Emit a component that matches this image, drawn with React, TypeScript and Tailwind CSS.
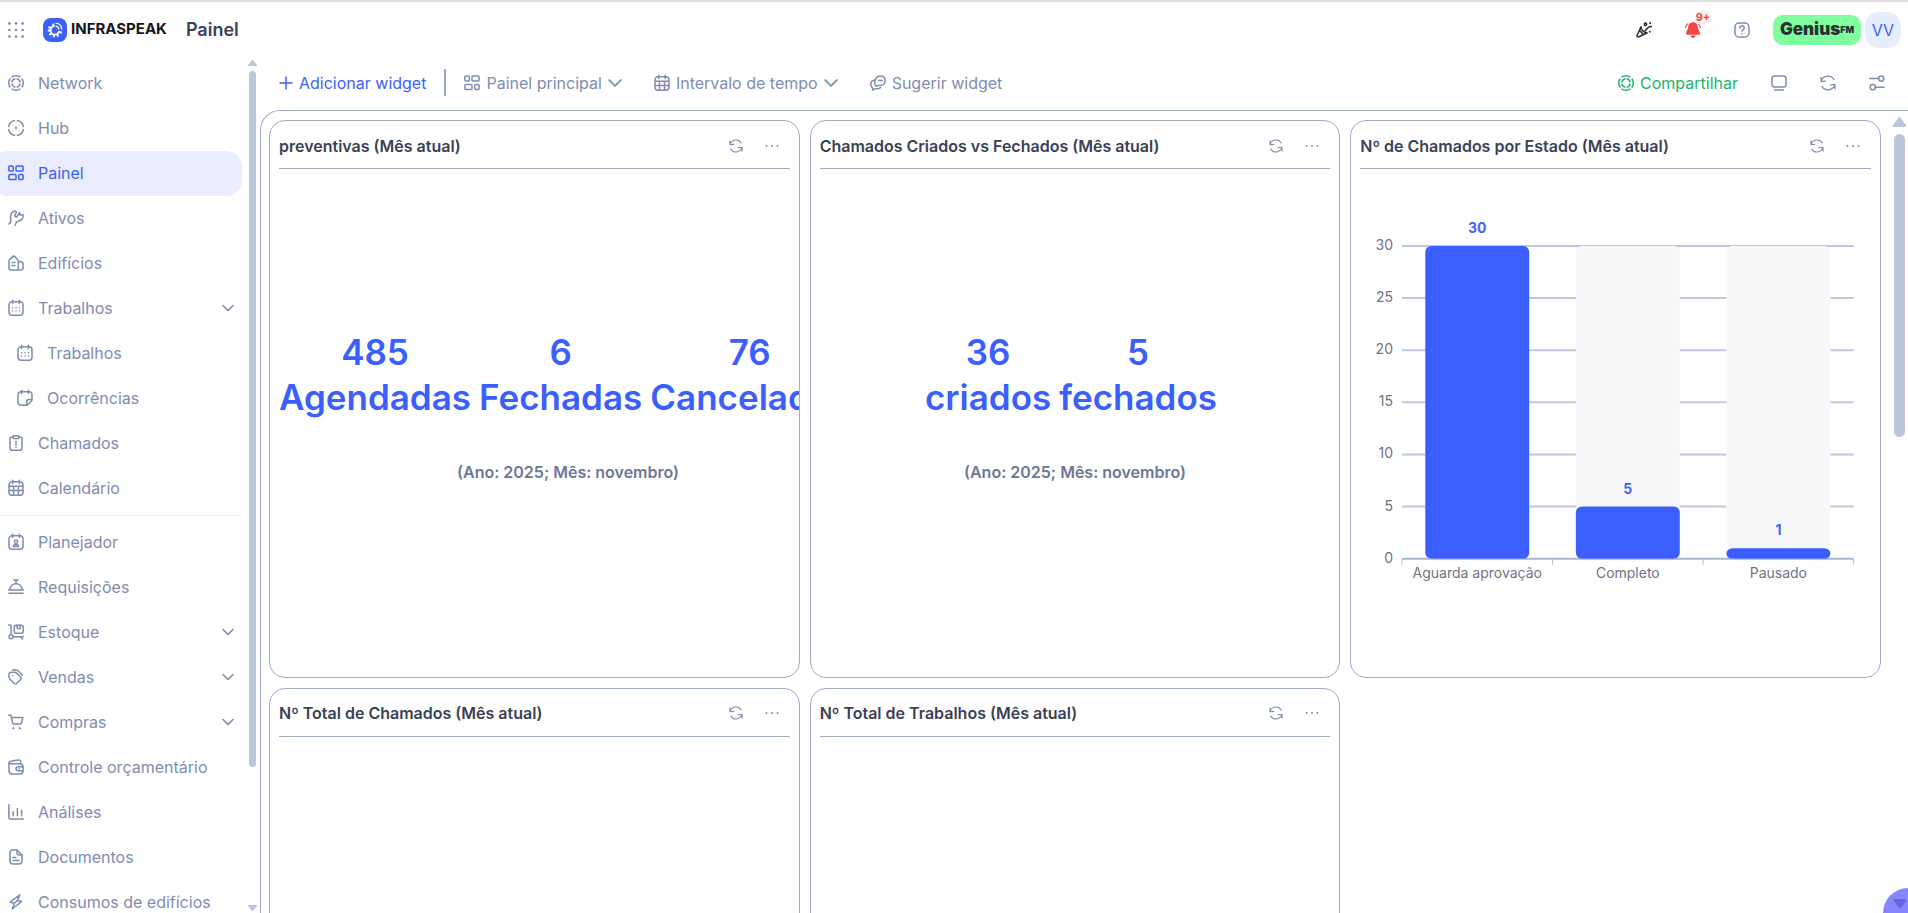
import React from 'react';

type IconName = keyof typeof icons;

// All icons share a 16x16 grid and inherit the current colour
const icons = {
    network: (
        <g strokeLinecap="butt">
            <circle cx="8" cy="8" r="7.3" pathLength="80" strokeDasharray="17 3" strokeDashoffset="8.5" />
            <circle cx="8" cy="8" r="4.2" pathLength="80" strokeDasharray="16 4" strokeDashoffset="-2" />
        </g>
    ),
    hub: (
        <>
            <circle cx="8" cy="8" r="7.5" pathLength="80" strokeDasharray="17 3" strokeDashoffset="-1.5" strokeLinecap="butt" />
            <circle cx="8" cy="8" r="0.4" />
        </>
    ),
    dashboard: (
        <>
            <rect x="0.9" y="0.9" width="4.4" height="5.2" rx="1.2" />
            <rect x="8" y="0.9" width="7.1" height="5.2" rx="1.2" />
            <rect x="0.9" y="9.4" width="7.1" height="5.2" rx="1.2" />
            <rect x="10.8" y="9.4" width="4.3" height="5.2" rx="1.2" />
        </>
    ),
    wrench: (
        <path d="M.9 14C3 12.6 3.2 11 2.7 8.8 1.8 4.6 3.8 1.2 7.6.9L8.5 2 7 4.8C6.3 6.8 8.2 7.6 9.3 6L11.4 2.6Q12.2 3.4 12.1 5.4L15 4.4C15.8 8 13.4 10.8 10.2 11.2 8 11.5 7.7 13 7.2 15.2" />
    ),
    building: (
        <path d="M1 6.3Q1 5.2 1.8 4.4L4.6 1.6Q5.6.6 6.7 1.6L9.4 4.4Q10.2 5.2 10.2 6.3V15H3Q1 15 1 13ZM10.2 6.8H13Q15 6.8 15 8.8V13Q15 15 13 15H10.2M4 7.4H7M4 10.4H7" />
    ),
    jobs: (
        <>
            <rect x="1" y="1.8" width="14" height="13.4" rx="3" />
            <path d="M4.6.3V3.4M11.4.3V3.4" />
            <path d="M4.4 7.7h.1M8 7.7h.1M11.5 7.7h.1M4.4 11h.1M8 11h.1M11.5 11h.1" />
        </>
    ),
    note: (
        <>
            <path d="M15 9.5V4.8Q15 1.8 12 1.8H4Q1 1.8 1 4.8V12Q1 15.2 4 15.2H9.2Q10.2 15.2 10.9 14.5L14.3 11.2Q15 10.5 15 9.5H12Q9.6 9.5 9.6 12V15" />
            <path d="M4.6.3V3.4M11.4.3V3.4" />
        </>
    ),
    clipboard: (
        <>
            <path d="M5 2H4Q2 2 2 4V13Q2 15.2 4 15.2H12Q14 15.2 14 13V4Q14 2 12 2H11" />
            <rect x="5" y="0.8" width="6" height="2.6" rx="1" />
            <path d="M8 6.2V10M8 12.2v.2" />
        </>
    ),
    calendar: (
        <>
            <rect x="1" y="1.8" width="14" height="13.4" rx="3" />
            <path d="M4.8.3V3.4M11.2.3V3.4M1 6.2H15M1 10.6H15M5.5 6.2V15M10.5 6.2V15" />
        </>
    ),
    planner: (
        <>
            <rect x="1" y="1.8" width="14" height="13.4" rx="3" />
            <path d="M4.6.3V3.4M11.4.3V3.4" />
            <circle cx="8" cy="7.7" r="1.6" />
            <path d="M5.3 12.6C5.8 9.8 10.2 9.8 10.7 12.6Z" />
        </>
    ),
    bell: <path d="M1.8 11C2 2.6 14 2.6 14.2 11ZM.5 11H15.5M1 14.2H15M5.8 1H10.2M8 1V4.6" />,
    stock: (
        <>
            <path d="M.7 1.1H1.6Q3.1 1.1 3.1 2.6V10.5" />
            <circle cx="3.1" cy="12.8" r="2" />
            <path d="M5.1 12.8H15.3M12.8 12.8L14.6 15" />
            <rect x="6.2" y="1.2" width="9" height="8" rx="2" />
            <path d="M9.2 1.2V4.6H12.2V1.2" />
        </>
    ),
    tags: (
        <>
            <path d="M1 5.6Q1 3.2 3.4 3.2H6.7Q7.7 3.2 8.4 3.9L12.5 8Q13.6 9.2 12.5 10.4L8.6 14.5Q7.4 15.6 6.2 14.5L1.8 10Q1 9.3 1 8.2Z" />
            <path d="M4.4 6.7h.2M4.5.9H8.4Q9.2.9 9.8 1.5L14.4 6.2" />
        </>
    ),
    cart: (
        <>
            <path d="M.7 1H2.6L3.6 3.4H14.9L13.6 8.6Q13.3 10 12 10H5.6Q5 10 4.7 9.2L3.4 3.4" />
            <path d="M5.2 14.2h.3M11.8 14.2h.3" strokeWidth="2" />
        </>
    ),
    wallet: (
        <>
            <path d="M1 4.2V11.8Q1 15 4.2 15H11.8Q15 15 15 11.8V7.8Q15 4.8 12 4.8H2.6Q1 4.8 1 3.8C1 2.6 3 2.3 5 1.8L10.4.9Q12.7.7 12.7 2.8V4.8" />
            <path d="M15 7.8H10.2Q8 7.8 8 9.8T10.2 11.8H15M11 9.8h.3" />
        </>
    ),
    analytics: <path d="M.9.8V13.2Q.9 15 2.7 15H15.4M5.2 7.8V11.8M9.4 4.5V11.8M13.6 6.2V11.8" />,
    document: (
        <>
            <path d="M9 1H5Q2 1 2 4V12Q2 15 5 15H11Q14 15 14 12V6Z" />
            <path d="M9 1V4Q9 6 11 6H14M5 8.5H7.8M5 11.5H11" />
        </>
    ),
    energy: <path d="M11.8.9L2.2 8.2 6.4 9.2 4.2 15 13.8 7.4 9.4 6.4ZM9.4 6.4L6.4 9.2" />,
    refresh: <path d="M1.2 6.6C2.8.3 11-.8 14 4.6M14.8 9.4C13.2 15.7 5 16.8 2 11.4M1 2.2L1.2 6.6 5.4 6.2M15 13.8L14.8 9.4 10.6 9.8" strokeWidth="1.3" />,
    chat: (
        <>
            <path d="M6.2 11.2C3.8 9.6 4.3.9 10.3.9 16.6.9 16.3 10.4 11 10.4H8.5Q7.8 10.4 6.2 11.2Z" />
            <path d="M4.4 4.9C.4 5.4-.2 11 2.5 12.6L2.6 15.2 5.4 13.7H7.6Q9.6 13.6 10.6 12.5M8.4 5.4H12.2" />
        </>
    ),
    screen: (
        <>
            <rect x="1" y="1" width="14" height="11" rx="2.4" />
            <path d="M3.6 15H12.4" />
        </>
    ),
    sliders: (
        <>
            <circle cx="12.2" cy="3.6" r="2.6" />
            <circle cx="3.8" cy="12.2" r="2.6" />
            <path d="M.8 3.6H9.6M6.4 12.2H15.2" />
        </>
    ),
    help: (
        <>
            <rect x="1" y="1" width="14" height="14" rx="4" />
            <path d="M5.8 6C6 3.2 10.4 3.4 10.2 6.1 10.1 7.6 8 7.6 8 9.3M8 11.8v.2" />
        </>
    ),
    party: (
        <>
            <path d="M5 4.8L1.2 13.2Q.6 15.3 2.8 14.8L11.2 11Q8.6 10.7 6.8 8.9T5 4.8ZM3.6 8.4L7.4 12.4" />
            <path d="M9.2 8.6L12 5.8Q13.5 4.4 15.4 4.6" />
            <circle cx="9.5" cy="2.2" r="1.2" />
            <path d="M14.2 1v.3M13.8 9.6v.2" strokeWidth="1.8" />
        </>
    ),
};

const Icon: React.FC<{ name: IconName; className?: string }> = ({ name, className = 'h-4 w-4' }) => (
    <svg
        viewBox="0 0 16 16"
        className={`shrink-0 overflow-visible ${className}`}
        fill="none"
        stroke="currentColor"
        strokeWidth="1.5"
        strokeLinecap="round"
        strokeLinejoin="round"
        aria-hidden="true"
    >
        {icons[name]}
    </svg>
);

const Chevron: React.FC<{ className: string }> = ({ className }) => (
    <svg viewBox="0 0 12 7" className={`shrink-0 ${className}`} fill="none" stroke="currentColor" strokeWidth="1.6" strokeLinecap="round" strokeLinejoin="round" aria-hidden="true">
        <path d="M1 1L6 6L11 1" />
    </svg>
);

interface NavItem {
    label: string;
    icon: IconName;
    active?: boolean;
    expandable?: boolean;
    nested?: boolean;
}

const mainNav: NavItem[] = [
    { label: 'Network', icon: 'network' },
    { label: 'Hub', icon: 'hub' },
    { label: 'Painel', icon: 'dashboard', active: true },
    { label: 'Ativos', icon: 'wrench' },
    { label: 'Edifícios', icon: 'building' },
    { label: 'Trabalhos', icon: 'jobs', expandable: true },
    { label: 'Trabalhos', icon: 'jobs', nested: true },
    { label: 'Ocorrências', icon: 'note', nested: true },
    { label: 'Chamados', icon: 'clipboard' },
    { label: 'Calendário', icon: 'calendar' },
];

const moreNav: NavItem[] = [
    { label: 'Planejador', icon: 'planner' },
    { label: 'Requisições', icon: 'bell' },
    { label: 'Estoque', icon: 'stock', expandable: true },
    { label: 'Vendas', icon: 'tags', expandable: true },
    { label: 'Compras', icon: 'cart', expandable: true },
    { label: 'Controle orçamentário', icon: 'wallet' },
    { label: 'Análises', icon: 'analytics' },
    { label: 'Documentos', icon: 'document' },
    { label: 'Consumos de edifícios', icon: 'energy' },
];

const NavLink: React.FC<{ item: NavItem }> = ({ item }) => (
    <a
        href="#"
        aria-current={item.active ? 'page' : undefined}
        className={`-ml-2 flex h-[45px] shrink-0 items-center gap-[14px] rounded-2xl pr-2 pb-[2px] text-base
            ${item.active ? 'bg-[#e9edff] text-[#3b5fff]' : 'text-[#7f8cb0]'}
            ${item.nested ? 'pl-[25px]' : 'pl-4'}`}
    >
        <Icon name={item.icon} />
        <span className="flex-1 whitespace-nowrap">{item.label}</span>
        {item.expandable && <Chevron className="h-3 w-3" />}
    </a>
);

const Sidebar: React.FC = () => (
    <aside className="flex w-[260px] shrink-0">
        <nav className="flex w-[242px] flex-col overflow-hidden pt-1">
            {mainNav.map((item, index) => (
                <NavLink key={index} item={item} />
            ))}
            <hr className="my-1 shrink-0 border-[#eceef2]" />
            {moreNav.map(item => (
                <NavLink key={item.label} item={item} />
            ))}
        </nav>
        {/* Scrollbar */}
        <div className="ml-[6px] flex w-[9px] flex-col items-center pt-[3px] pb-[2px] text-[#bcc5da]">
            <svg viewBox="0 0 9 6" className="h-[6px] w-[9px]" fill="currentColor"><path d="M4 0H5L9 5V6H0V5Z" /></svg>
            <div className="my-[5px] w-full flex-1 px-px">
                <div className="h-[84%] rounded-full bg-[#bcc5da]" />
            </div>
            <svg viewBox="0 0 9 6" className="h-[6px] w-[9px]" fill="currentColor"><path d="M0 0H9V1L5 6H4L0 1Z" /></svg>
        </div>
    </aside>
);

const Logo: React.FC = () => (
    <a href="#" className="ml-[19px] flex items-center gap-1" aria-label="Infraspeak">
        <svg viewBox="0 0 24 24" className="h-6 w-6" fill="none" stroke="white">
            <rect width="24" height="24" rx="8" fill="#3b5fff" stroke="none" />
            <path d="M11.5 8.2A4.2 4.2 0 1 0 16 13" strokeWidth="1.8" />
            <path d="M10.6 8.4L10 5.6M8 10.2L5.4 8.8M7.6 12.6H4.8M8.4 15L6.4 17.2M11.2 16.6L10.6 19.2M14 16L15.4 18.4M15.8 13.8L18.8 14.8" strokeWidth="2" />
            <path d="M13 5.2A6.6 6.6 0 0 1 18.8 11M13 8.2A3.8 3.8 0 0 1 15.9 11" strokeWidth="1.3" strokeLinecap="round" />
        </svg>
        <span className="text-[15px] font-bold text-[#14151f]">INFRASPEAK</span>
    </a>
);

const Header: React.FC = () => (
    <header className="flex h-[55px] shrink-0 items-center pr-[7px] pl-2">
        <button aria-label="Aplicativos" className="text-[#7f8cb0]">
            <svg viewBox="0 0 16 16" className="h-4 w-4" fill="currentColor">
                {[1.4, 8, 14.6].map(y => [1.4, 8, 14.6].map(x => <circle key={`${x}-${y}`} cx={x} cy={y} r="1.3" />))}
            </svg>
        </button>
        <Logo />
        <h1 className="ml-[19px] text-lg font-semibold text-[#3a4154]">Painel</h1>

        <div className="ml-auto flex items-center">
            <div className="mr-[23px] flex items-center gap-[33px] text-[#7f8cb0]">
                <button aria-label="Novidades" className="text-[#262b38]"><Icon name="party" /></button>
                <button aria-label="Notificações" className="relative text-[#f54545]">
                    <svg viewBox="0 0 16 16" className="h-4 w-4 overflow-visible" fill="currentColor">
                        <path d="M8 .2C11.4.2 12.7 2.6 12.9 5.5 13 7.8 15 9.4 15 11.4 15 12.3 14.4 12.8 13.6 12.8H2.4C1.6 12.8 1 12.3 1 11.4 1 9.4 3 7.8 3.1 5.5 3.3 2.6 4.6.2 8 .2ZM5.2 13.6H10.8Q10.1 16 8 16T5.2 13.6Z" />
                        <path d="M.6 5.5Q.8 3.2 2.4 2M15.4 5.5Q15.2 3.2 13.6 2" fill="none" stroke="currentColor" strokeWidth="1.2" strokeLinecap="round" />
                    </svg>
                    <span className="absolute -top-3 left-2.5 flex h-[15px] w-4 items-center justify-center rounded-full bg-[#f0f0f0] text-[11px] font-bold">9+</span>
                </button>
                <button aria-label="Ajuda"><Icon name="help" /></button>
            </div>
            <button className="flex h-[30px] w-[88px] items-center justify-center rounded-[10px] bg-[#80ffa0] text-[17px] font-black text-[#2b2f33]">
                Genius<span className="text-[9px]">FM</span>
            </button>
            <button className="ml-1 h-9 w-9 rounded-[14px] bg-[#e6edff] text-base text-[#3b5fff]">VV</button>
        </div>
    </header>
);

const Toolbar: React.FC = () => (
    <div className="flex h-[53px] shrink-0 items-center pr-[23px] pb-[2px] pl-[19px] text-base whitespace-nowrap text-[#7f8cb0]">
        <button className="flex items-center gap-[6px] text-[#3b5fff]">
            <svg viewBox="0 0 14 14" className="h-[14px] w-[14px]" stroke="currentColor" strokeWidth="1.5" strokeLinecap="round"><path d="M7 1V13M1 7H13" /></svg>
            Adicionar widget
        </button>
        <div className="mx-[18px] h-[27px] w-[2px] bg-[#98a4c6]" />
        <button className="flex items-center gap-[6px]">
            <Icon name="dashboard" />
            Painel principal
            <Chevron className="h-[14px] w-[14px]" />
        </button>
        <button className="ml-8 flex items-center gap-[6px]">
            <Icon name="calendar" />
            Intervalo de tempo
            <Chevron className="h-[14px] w-[14px]" />
        </button>
        <button className="ml-8 flex items-center gap-[6px]">
            <Icon name="chat" />
            Sugerir widget
        </button>
        <div className="ml-auto flex items-center gap-[33px]">
            <button className="flex items-center gap-[6px] text-[#20b26b]">
                <Icon name="network" />
                Compartilhar
            </button>
            <button aria-label="Tela cheia"><Icon name="screen" /></button>
            <button aria-label="Atualizar"><Icon name="refresh" /></button>
            <button aria-label="Filtros"><Icon name="sliders" /></button>
        </div>
    </div>
);

const Widget: React.FC<{ title: string; children?: React.ReactNode }> = ({ title, children }) => (
    <section className="flex min-h-[557px] min-w-0 flex-col overflow-hidden rounded-2xl border border-[#a0abca] px-[9px]">
        <div className="flex h-12 shrink-0 items-center border-b border-[#a0abca] pt-[2px] pr-[11px] text-[#7f8cb0]">
            <h2 className="flex-1 text-base font-semibold whitespace-nowrap text-[#3a4154]">{title}</h2>
            <button aria-label="Atualizar widget"><Icon name="refresh" className="h-[14px] w-[14px]" /></button>
            <button aria-label="Mais opções" className="ml-[22px]">
                <svg viewBox="0 0 14 14" className="h-[14px] w-[14px]" fill="currentColor">
                    <circle cx="1.5" cy="7" r="1" /><circle cx="7" cy="7" r="1" /><circle cx="12.5" cy="7" r="1" />
                </svg>
            </button>
        </div>
        {children}
    </section>
);

const Totals: React.FC<{ items: { value: number; label: string }[] }> = ({ items }) => (
    <div className="flex flex-1 flex-col items-start justify-center pb-8">
        <div className="mx-auto">
            <div className="flex text-[35px] leading-[45px] font-semibold text-[#3b5fff]">
                {items.map(item => (
                    <div key={item.label} className="mr-2 text-center">
                        <div>{item.value}</div>
                        <div>{item.label}</div>
                    </div>
                ))}
            </div>
            <p className="mt-10 text-center text-base font-semibold text-[#6b7896]">(Ano: 2025; Mês: novembro)</p>
        </div>
    </div>
);

const states = [
    { label: 'Aguarda aprovação', value: 30 },
    { label: 'Completo', value: 5 },
    { label: 'Pausado', value: 1 },
];

const StateChart: React.FC = () => {
    const left = 42;
    const right = 494;
    const bottom = 390;
    const height = 313;
    const band = (right - left) / states.length;
    const y = (value: number) => bottom - (value / 30) * height;

    return (
        <svg viewBox="0 0 511 508" className="w-full" role="img" aria-label="Chamados por estado">
            {[0, 5, 10, 15, 20, 25, 30].map(tick => (
                <g key={tick}>
                    <line x1={left} x2={right} y1={y(tick)} y2={y(tick)} stroke={tick === 0 ? '#a9b4cf' : '#c0c8df'} strokeWidth="2" />
                    <text x={left - 9} y={y(tick) + 4} textAnchor="end" fontSize="14" fill="#6e7488">{tick}</text>
                </g>
            ))}
            {[0, 1, 2, 3].map(i => (
                <line key={i} x1={left + i * band} x2={left + i * band} y1={bottom} y2={bottom + 6} stroke="#b4bed6" />
            ))}
            {states.map((state, i) => {
                const center = left + band * (i + 0.5);
                const top = y(state.value);
                return (
                    <g key={state.label} textAnchor="middle">
                        <rect x={center - 52} y={y(30)} width="104" height={height} rx="6" fill="#f7f8fa" />
                        <rect x={center - 52} y={top} width="104" height={bottom - top} rx="6" fill="#3b5fff" />
                        <text x={center} y={top - 13} fontSize="14" fontWeight="700" fill="#4163ff">{state.value}</text>
                        <text x={center} y={bottom + 19} fontSize="14" fill="#6e7488">{state.label}</text>
                    </g>
                );
            })}
        </svg>
    );
};

const App: React.FC = () => (
    <div className="relative flex h-screen flex-col overflow-hidden border-t-2 border-[#e0e0e0] bg-white font-['Inter',sans-serif]">
        <Header />
        <div className="flex min-h-0 flex-1">
            <Sidebar />
            <main className="flex min-w-0 flex-1 flex-col">
                <Toolbar />
                <div className="flex min-h-0 flex-1 rounded-tl-[20px] border-t border-l border-[#a0abca] pr-[2px]">
                    <div className="min-w-0 flex-1 overflow-hidden pt-[9px] pr-3 pl-2">
                        <div className="grid grid-cols-3 gap-[10px]">
                            <Widget title="preventivas (Mês atual)">
                                <Totals
                                    items={[
                                        { value: 485, label: 'Agendadas' },
                                        { value: 6, label: 'Fechadas' },
                                        { value: 76, label: 'Canceladas' },
                                    ]}
                                />
                            </Widget>
                            <Widget title="Chamados Criados vs Fechados (Mês atual)">
                                <Totals
                                    items={[
                                        { value: 36, label: 'criados' },
                                        { value: 5, label: 'fechados' },
                                    ]}
                                />
                            </Widget>
                            <Widget title="Nº de Chamados por Estado (Mês atual)">
                                <StateChart />
                            </Widget>
                            <Widget title="Nº Total de Chamados (Mês atual)" />
                            <Widget title="Nº Total de Trabalhos (Mês atual)" />
                        </div>
                    </div>
                    {/* Scrollbar */}
                    <div className="flex w-[13px] flex-col items-center pt-[6px] pb-[5px] text-[#bcc5da]">
                        <svg viewBox="0 0 13 10" className="h-[10px] w-[13px]" fill="currentColor"><path d="M6 0H7L13 8V10H0V8Z" /></svg>
                        <div className="my-[7px] w-full flex-1 px-px">
                            <div className="h-[40%] rounded-full bg-[#bcc5da]" />
                        </div>
                        <svg viewBox="0 0 13 10" className="h-[10px] w-[13px]" fill="currentColor"><path d="M0 0H13V2L7 10H6L0 2Z" /></svg>
                    </div>
                </div>
            </main>
        </div>

        {/* Chat bubble, mostly outside the window */}
        <button aria-label="Abrir chat" className="absolute right-0 bottom-0 h-[25px] w-[25px] rounded-tl-full bg-[#8886ff]">
            <svg viewBox="0 0 25 25" className="h-full w-full" fill="#6765dd"><path d="M11 11H23V13L18 20H16L11 13Z" /></svg>
        </button>
    </div>
);

export default App;
